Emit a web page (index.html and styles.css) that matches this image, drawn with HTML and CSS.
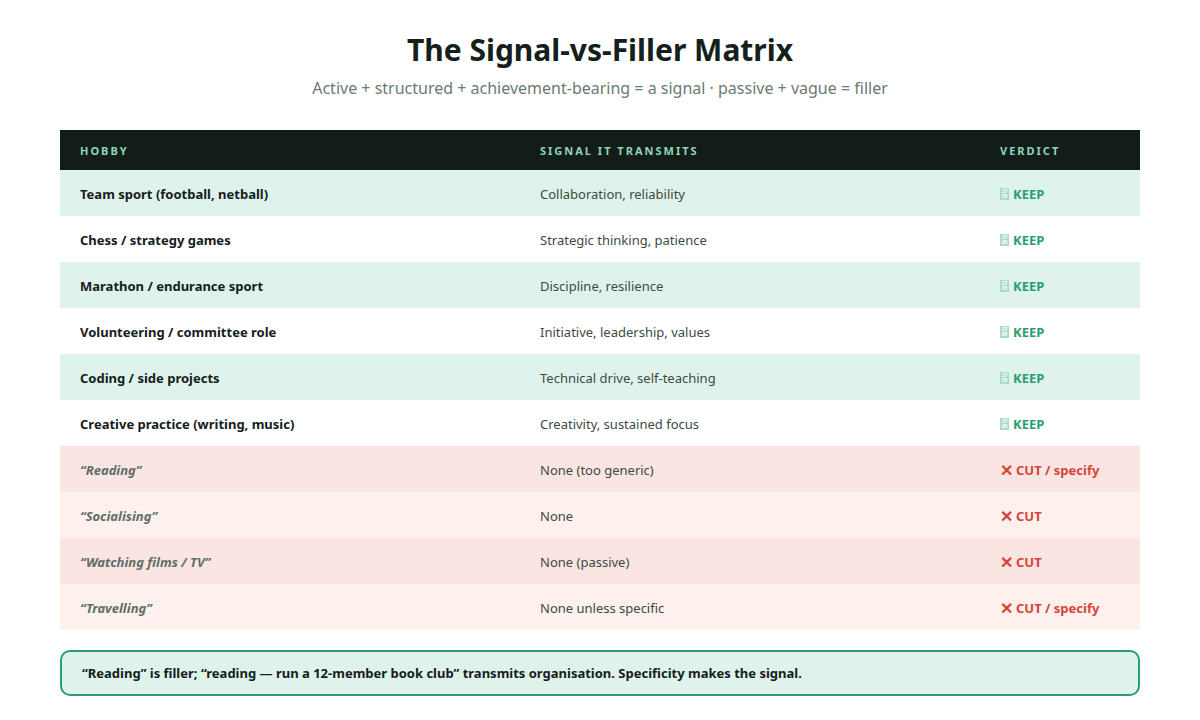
FILE: index.html
```html
<!DOCTYPE html>
<html lang="en">
<head>
<meta charset="utf-8">
<title>The Signal-vs-Filler Matrix</title>
<link rel="stylesheet" href="styles.css">
</head>
<body>
<main class="page">
  <h1 class="title">The Signal-vs-Filler Matrix</h1>
  <p class="subtitle">Active + structured + achievement-bearing = a signal · passive + vague = filler</p>
  <table class="matrix">
    <thead>
      <tr><th>Hobby</th><th>Signal it transmits</th><th>Verdict</th></tr>
    </thead>
    <tbody>
      <tr class="keep a"><td class="hobby">Team sport (football, netball)</td><td>Collaboration, reliability</td><td class="verdict"><span class="v"><span class="tofu" title="✅"><span>27</span><span>05</span></span>KEEP</span></td></tr>
      <tr class="keep b"><td class="hobby">Chess / strategy games</td><td>Strategic thinking, patience</td><td class="verdict"><span class="v"><span class="tofu" title="✅"><span>27</span><span>05</span></span>KEEP</span></td></tr>
      <tr class="keep a"><td class="hobby">Marathon / endurance sport</td><td>Discipline, resilience</td><td class="verdict"><span class="v"><span class="tofu" title="✅"><span>27</span><span>05</span></span>KEEP</span></td></tr>
      <tr class="keep b"><td class="hobby">Volunteering / committee role</td><td>Initiative, leadership, values</td><td class="verdict"><span class="v"><span class="tofu" title="✅"><span>27</span><span>05</span></span>KEEP</span></td></tr>
      <tr class="keep a"><td class="hobby">Coding / side projects</td><td>Technical drive, self-teaching</td><td class="verdict"><span class="v"><span class="tofu" title="✅"><span>27</span><span>05</span></span>KEEP</span></td></tr>
      <tr class="keep b"><td class="hobby">Creative practice (writing, music)</td><td>Creativity, sustained focus</td><td class="verdict"><span class="v"><span class="tofu" title="✅"><span>27</span><span>05</span></span>KEEP</span></td></tr>
      <tr class="cut a"><td class="hobby">“Reading”</td><td>None (too generic)</td><td class="verdict"><span class="v"><span class="x">✕</span>CUT / specify</span></td></tr>
      <tr class="cut b"><td class="hobby">“Socialising”</td><td>None</td><td class="verdict"><span class="v"><span class="x">✕</span>CUT</span></td></tr>
      <tr class="cut a"><td class="hobby">“Watching films / TV”</td><td>None (passive)</td><td class="verdict"><span class="v"><span class="x">✕</span>CUT</span></td></tr>
      <tr class="cut b"><td class="hobby">“Travelling”</td><td>None unless specific</td><td class="verdict"><span class="v"><span class="x">✕</span>CUT / specify</span></td></tr>
    </tbody>
  </table>
  <div class="note">“Reading” is filler; “reading — run a 12-member book club” transmits organisation. Specificity makes the signal.</div>
</main>
</body>
</html>
```
FILE: styles.css
```css
* { box-sizing: border-box; }
html, body { margin: 0; padding: 0; background: #ffffff; }
body {
  font-family: "Noto Sans", "Open Sans", sans-serif;
  color: #14201b;
}
.page {
  width: 1080px;
  margin: 0 auto;
  padding-top: 30px;
}
.title {
  margin: 0;
  text-align: center;
  font-size: 30px;
  line-height: 40px;
  font-weight: 700;
  color: #14201b;
}
.subtitle {
  margin: 7px 0 0;
  text-align: center;
  font-size: 16px;
  line-height: 22px;
  color: #6b7a74;
}
.matrix {
  margin-top: 31px;
  width: 100%;
  border-collapse: collapse;
  table-layout: fixed;
  font-size: 13px;
}
.matrix th:nth-child(1), .matrix td:nth-child(1) { width: 460px; }
.matrix th:nth-child(2), .matrix td:nth-child(2) { width: 460px; }
.matrix th:nth-child(3), .matrix td:nth-child(3) { width: 160px; }
.matrix thead tr { background: #121d19; }
.matrix th {
  height: 40px;
  padding: 1px 20px 0;
  text-align: left;
  font-size: 11px;
  font-weight: 700;
  letter-spacing: 2px;
  text-transform: uppercase;
  color: #8fd5b6;
}
.matrix td {
  height: 46px;
  padding: 2px 20px 0;
  color: #3c4a44;
}
.matrix td.hobby { font-weight: 700; color: #14201b; }
.keep.a { background: #dff3ec; }
.keep.b { background: #ffffff; }
.cut.a { background: #fae5e2; }
.cut.b { background: #fdf0ed; }
.cut td.hobby { font-style: italic; color: #5f6e68; }
.verdict { font-weight: 700; }
.matrix .cut td.verdict { color: #d6443a; }
.matrix .keep td.verdict { color: #2a9d72; }
.v {
  display: flex;
  align-items: center;
  line-height: 18px;
}
.tofu {
  display: flex;
  flex-direction: column;
  justify-content: center;
  align-items: center;
  width: 9px;
  height: 12px;
  margin-right: 4px;
  background: #a9dcc6;
  color: #ffffff;
  font-size: 5px;
  line-height: 5px;
  font-weight: 700;
}
.x {
  margin-right: 3px;
  font-size: 16px;
  font-weight: 700;
}
.note {
  margin-top: 20px;
  height: 46px;
  display: flex;
  align-items: center;
  padding: 0 20px;
  background: #dff3ec;
  border: 2px solid #2a9d72;
  border-radius: 10px;
  font-size: 13px;
  font-weight: 700;
  color: #14201b;
}
```
